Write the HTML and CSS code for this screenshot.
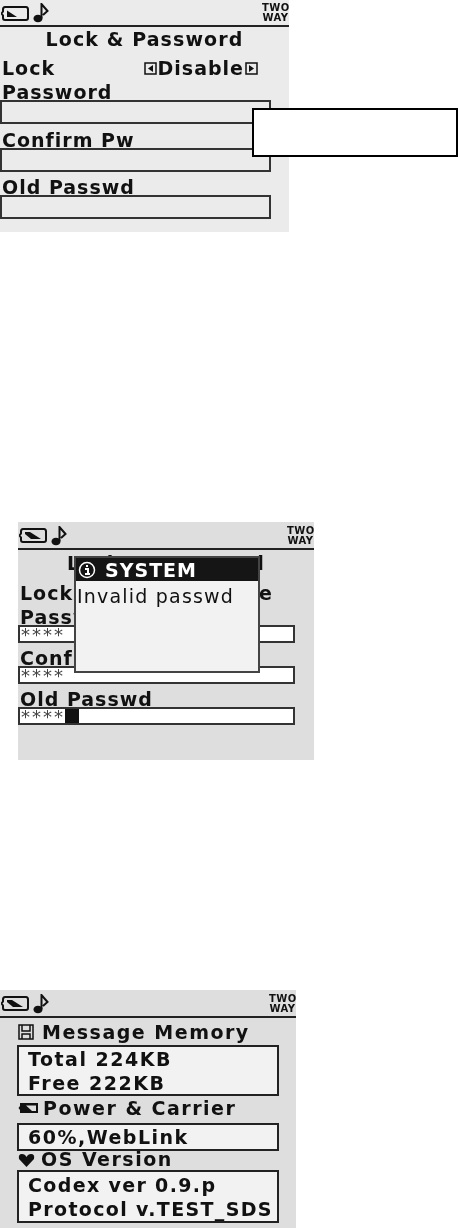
FILE: index.html
```html
<!DOCTYPE html>
<html lang="en">
<head>
<meta charset="utf-8">
<title>Device screens</title>
<link rel="stylesheet" href="styles.css">
</head>
<body>
<div class="page">
  <section class="screen screen-lock">
    <header class="status">
      <svg class="battery" viewBox="0 0 29 15" width="29" height="15"><path d="M0.500 7.500L2 5.500V3.500Q2 1 4 1H25Q27 1 27 3.500V12Q27 14 25 14H4Q2 14 2 12V9.500Z" fill="none" stroke="#111" stroke-width="2"/><path d="M6 4.500L16 11H6Z" fill="#111"/></svg>
      <svg class="note" viewBox="0 0 16 20" width="16" height="20"><ellipse cx="5" cy="15.500" rx="4.500" ry="3.800" fill="#111"/><path d="M8.500 15V1L14.500 8L10 12" fill="none" stroke="#111" stroke-width="2"/></svg>
      <div class="two-way">TWO<br>WAY</div>
    </header>
    <h1 class="title">Lock &amp; Password</h1>
    <div class="option">
      <span>Lock</span>
      <span class="picker">
        <svg class="arrow" viewBox="0 0 13 13" width="13" height="13"><rect x="1" y="1" width="11" height="11" fill="none" stroke="#111" stroke-width="1.500"/><path d="M9 3V10L4 6.500Z" fill="#111"/></svg>Disable<svg class="arrow" viewBox="0 0 13 13" width="13" height="13"><rect x="1" y="1" width="11" height="11" fill="none" stroke="#111" stroke-width="1.500"/><path d="M4 3V10L9 6.500Z" fill="#111"/></svg>
      </span>
    </div>
    <div class="label">Password</div>
    <div class="field"></div>
    <div class="label label-gap">Confirm Pw</div>
    <div class="field"></div>
    <div class="label label-gap label-old">Old Passwd</div>
    <div class="field"></div>
    <div class="blank-box"></div>
  </section>

  <section class="screen screen-system">
    <header class="status">
      <svg class="battery" viewBox="0 0 29 15" width="29" height="15"><path d="M0.500 7.500L2 5.500V3.500Q2 1 4 1H25Q27 1 27 3.500V12Q27 14 25 14H4Q2 14 2 12V9.500Z" fill="none" stroke="#111" stroke-width="2"/><path d="M6 4H11L22 11H12L6 6Z" fill="#111"/></svg>
      <svg class="note" viewBox="0 0 16 20" width="16" height="20"><ellipse cx="5" cy="15.500" rx="4.500" ry="3.800" fill="#111"/><path d="M8.500 15V1L14.500 8L10 12" fill="none" stroke="#111" stroke-width="2"/></svg>
      <div class="two-way">TWO<br>WAY</div>
    </header>
    <h1 class="title">Lock &amp; Password</h1>
    <div class="option">
      <span>Lock</span>
      <span class="picker">Disable</span>
    </div>
    <div class="label">Password</div>
    <div class="field filled"><span class="stars">****</span></div>
    <div class="label label-gap">Confirm Pw</div>
    <div class="field filled"><span class="stars">****</span></div>
    <div class="label label-gap">Old Passwd</div>
    <div class="field filled"><span class="stars">****</span><span class="cursor"></span></div>
    <div class="dialog">
      <div class="dialog-head">
        <svg viewBox="0 0 18 18" width="18" height="18"><circle cx="9" cy="9" r="7.500" fill="none" stroke="#fff" stroke-width="1.500"/><path d="M9 4V6M7 8H10V13M7 13H12" fill="none" stroke="#fff" stroke-width="2"/></svg>
        <span>SYSTEM</span>
      </div>
      <div class="dialog-body">Invalid passwd</div>
    </div>
  </section>

  <section class="screen screen-info">
    <header class="status">
      <svg class="battery" viewBox="0 0 29 15" width="29" height="15"><path d="M0.500 7.500L2 5.500V3.500Q2 1 4 1H25Q27 1 27 3.500V12Q27 14 25 14H4Q2 14 2 12V9.500Z" fill="none" stroke="#111" stroke-width="2"/><path d="M6 4H11L22 11H12L6 6Z" fill="#111"/></svg>
      <svg class="note" viewBox="0 0 16 20" width="16" height="20"><ellipse cx="5" cy="15.500" rx="4.500" ry="3.800" fill="#111"/><path d="M8.500 15V1L14.500 8L10 12" fill="none" stroke="#111" stroke-width="2"/></svg>
      <div class="two-way">TWO<br>WAY</div>
    </header>
    <div class="info">
      <div class="info-head head-memory">
        <svg viewBox="0 0 16 16" width="16" height="16"><path d="M1 1H15V15H1ZM4 1V7H12V1M4 15V10H12V15" fill="none" stroke="#111" stroke-width="1.500"/></svg>
        <span>Message Memory</span>
      </div>
      <div class="info-box box-memory">Total 224KB<br>Free 222KB</div>
      <div class="info-head head-power">
        <svg viewBox="0 0 21 12" width="21" height="12"><path d="M0.500 6L2 4V1H20V11H2V8Z" fill="#111"/><path d="M8 3.500H18V9H14Z" fill="#dedede"/></svg>
        <span>Power &amp; Carrier</span>
      </div>
      <div class="info-box box-power">60%,WebLink</div>
      <div class="info-head head-os">
        <svg viewBox="0 0 17 14" width="17" height="14"><path d="M8.500 14L1 6Q0 1 4 1Q7 1 8.500 4Q10 1 13 1Q17 1 16 6Z" fill="#111"/></svg>
        <span>OS Version</span>
      </div>
      <div class="info-box box-os">Codex ver 0.9.p<br>Protocol v.TEST_SDS</div>
    </div>
  </section>
</div>
</body>
</html>
```

FILE: styles.css
```css
* { box-sizing: border-box; }

html, body {
  margin: 0;
  background: #fff;
}

.page {
  width: 458px;
  height: 1228px;
  overflow: hidden;
  font-family: "DejaVu Sans", Verdana, sans-serif;
  color: #111;
}

.screen {
  position: relative;
  display: flex;
  flex-direction: column;
}

.status, .title, .option, .label, .field, .dialog, .info {
  filter: blur(.35px);
}

.screen-lock {
  width: 289px;
  height: 232px;
  background: #ebebeb;
}

.screen-system {
  width: 296px;
  height: 238px;
  margin: 290px 0 0 18px;
  background: #dedede;
}

.screen-info {
  width: 296px;
  height: 238px;
  margin-top: 230px;
  background: #dedede;
}

.status {
  display: flex;
  align-items: center;
  height: 27px;
  flex: none;
  padding: 1px 0 0 1px;
  border-bottom: 2px solid #222;
  gap: 3px;
}

.screen-system .status, .screen-info .status { height: 28px; }

.two-way {
  margin-left: auto;
  font-size: 10px;
  font-weight: 700;
  line-height: 10px;
  text-align: center;
  letter-spacing: .4px;
  width: 27px;
  flex: none;
}

.title {
  margin: 1px 0 0;
  height: 23px;
  font-size: 19px;
  line-height: 23px;
  font-weight: 700;
  text-align: center;
  letter-spacing: 1.100px;
  white-space: nowrap;
}

.screen-system .title { margin-top: 2px; }

.option {
  display: flex;
  justify-content: space-between;
  height: 24px;
  margin-top: 5px;
  padding: 0 31px 0 2px;
  font-size: 19px;
  line-height: 24px;
  font-weight: 700;
  letter-spacing: 1px;
}

.screen-system .option { padding-right: 41px; margin-top: 6px; }

.picker {
  display: flex;
  align-items: center;
  gap: 1px;
  height: 24px;
}

.label {
  height: 20px;
  padding-left: 2px;
  font-size: 19px;
  line-height: 25px;
  font-weight: 700;
  letter-spacing: 1px;
  white-space: nowrap;
  flex: none;
}

.label-gap { margin-top: 4px; }
.label-old { margin-top: 3px; }
.screen-system .label-gap { margin-top: 3px; }

.field {
  position: relative;
  display: flex;
  flex: none;
  width: 271px;
  height: 24px;
  border: 2px solid #333;
  background: #ebebeb;
}

.field.filled {
  width: 277px;
  height: 18px;
  background: #fff;
}

.stars {
  font-size: 18px;
  line-height: 15px;
  padding-left: 1px;
  letter-spacing: 2px;
  color: #444;
}

.cursor {
  width: 14px;
  height: 100%;
  background: #111;
}

.blank-box {
  position: absolute;
  left: 252px;
  top: 108px;
  width: 206px;
  height: 49px;
  border: 2px solid #000;
  background: #fff;
}

.dialog {
  position: absolute;
  left: 56px;
  top: 34px;
  width: 186px;
  height: 117px;
  display: flex;
  flex-direction: column;
  border: 2px solid #444;
  background: #f2f2f2;
}

.dialog-head {
  display: flex;
  align-items: center;
  gap: 9px;
  height: 23px;
  padding-left: 2px;
  background: #151515;
  color: #fff;
  font-size: 19px;
  font-weight: 700;
  letter-spacing: 1px;
}

.dialog-body {
  padding-left: 1px;
  font-size: 19px;
  line-height: 30px;
  letter-spacing: 1.200px;
  white-space: nowrap;
}

.info {
  display: flex;
  flex-direction: column;
  padding-left: 17px;
}

.info-head {
  display: flex;
  align-items: center;
  height: 27px;
  padding-left: 1px;
  font-size: 19px;
  font-weight: 700;
  letter-spacing: 1.500px;
  white-space: nowrap;
}

.head-memory { gap: 8px; padding-top: 1px; }
.head-power { height: 27px; gap: 4px; align-items: flex-start; line-height: 24px; }
.head-power svg { margin-top: 6px; }
.head-os { height: 19px; gap: 6px; line-height: 17px; align-items: flex-start; }
.head-os svg { margin-top: 2px; }

.info-box {
  width: 262px;
  border: 2px solid #222;
  background: #f2f2f2;
  padding: 0 0 0 9px;
  font-size: 19px;
  line-height: 24px;
  font-weight: 700;
  letter-spacing: 1.500px;
  white-space: nowrap;
}

.box-memory { height: 51px; }
.box-power { height: 28px; }
.box-os { height: 53px; padding-top: 1px; letter-spacing: 1.350px; }
```
